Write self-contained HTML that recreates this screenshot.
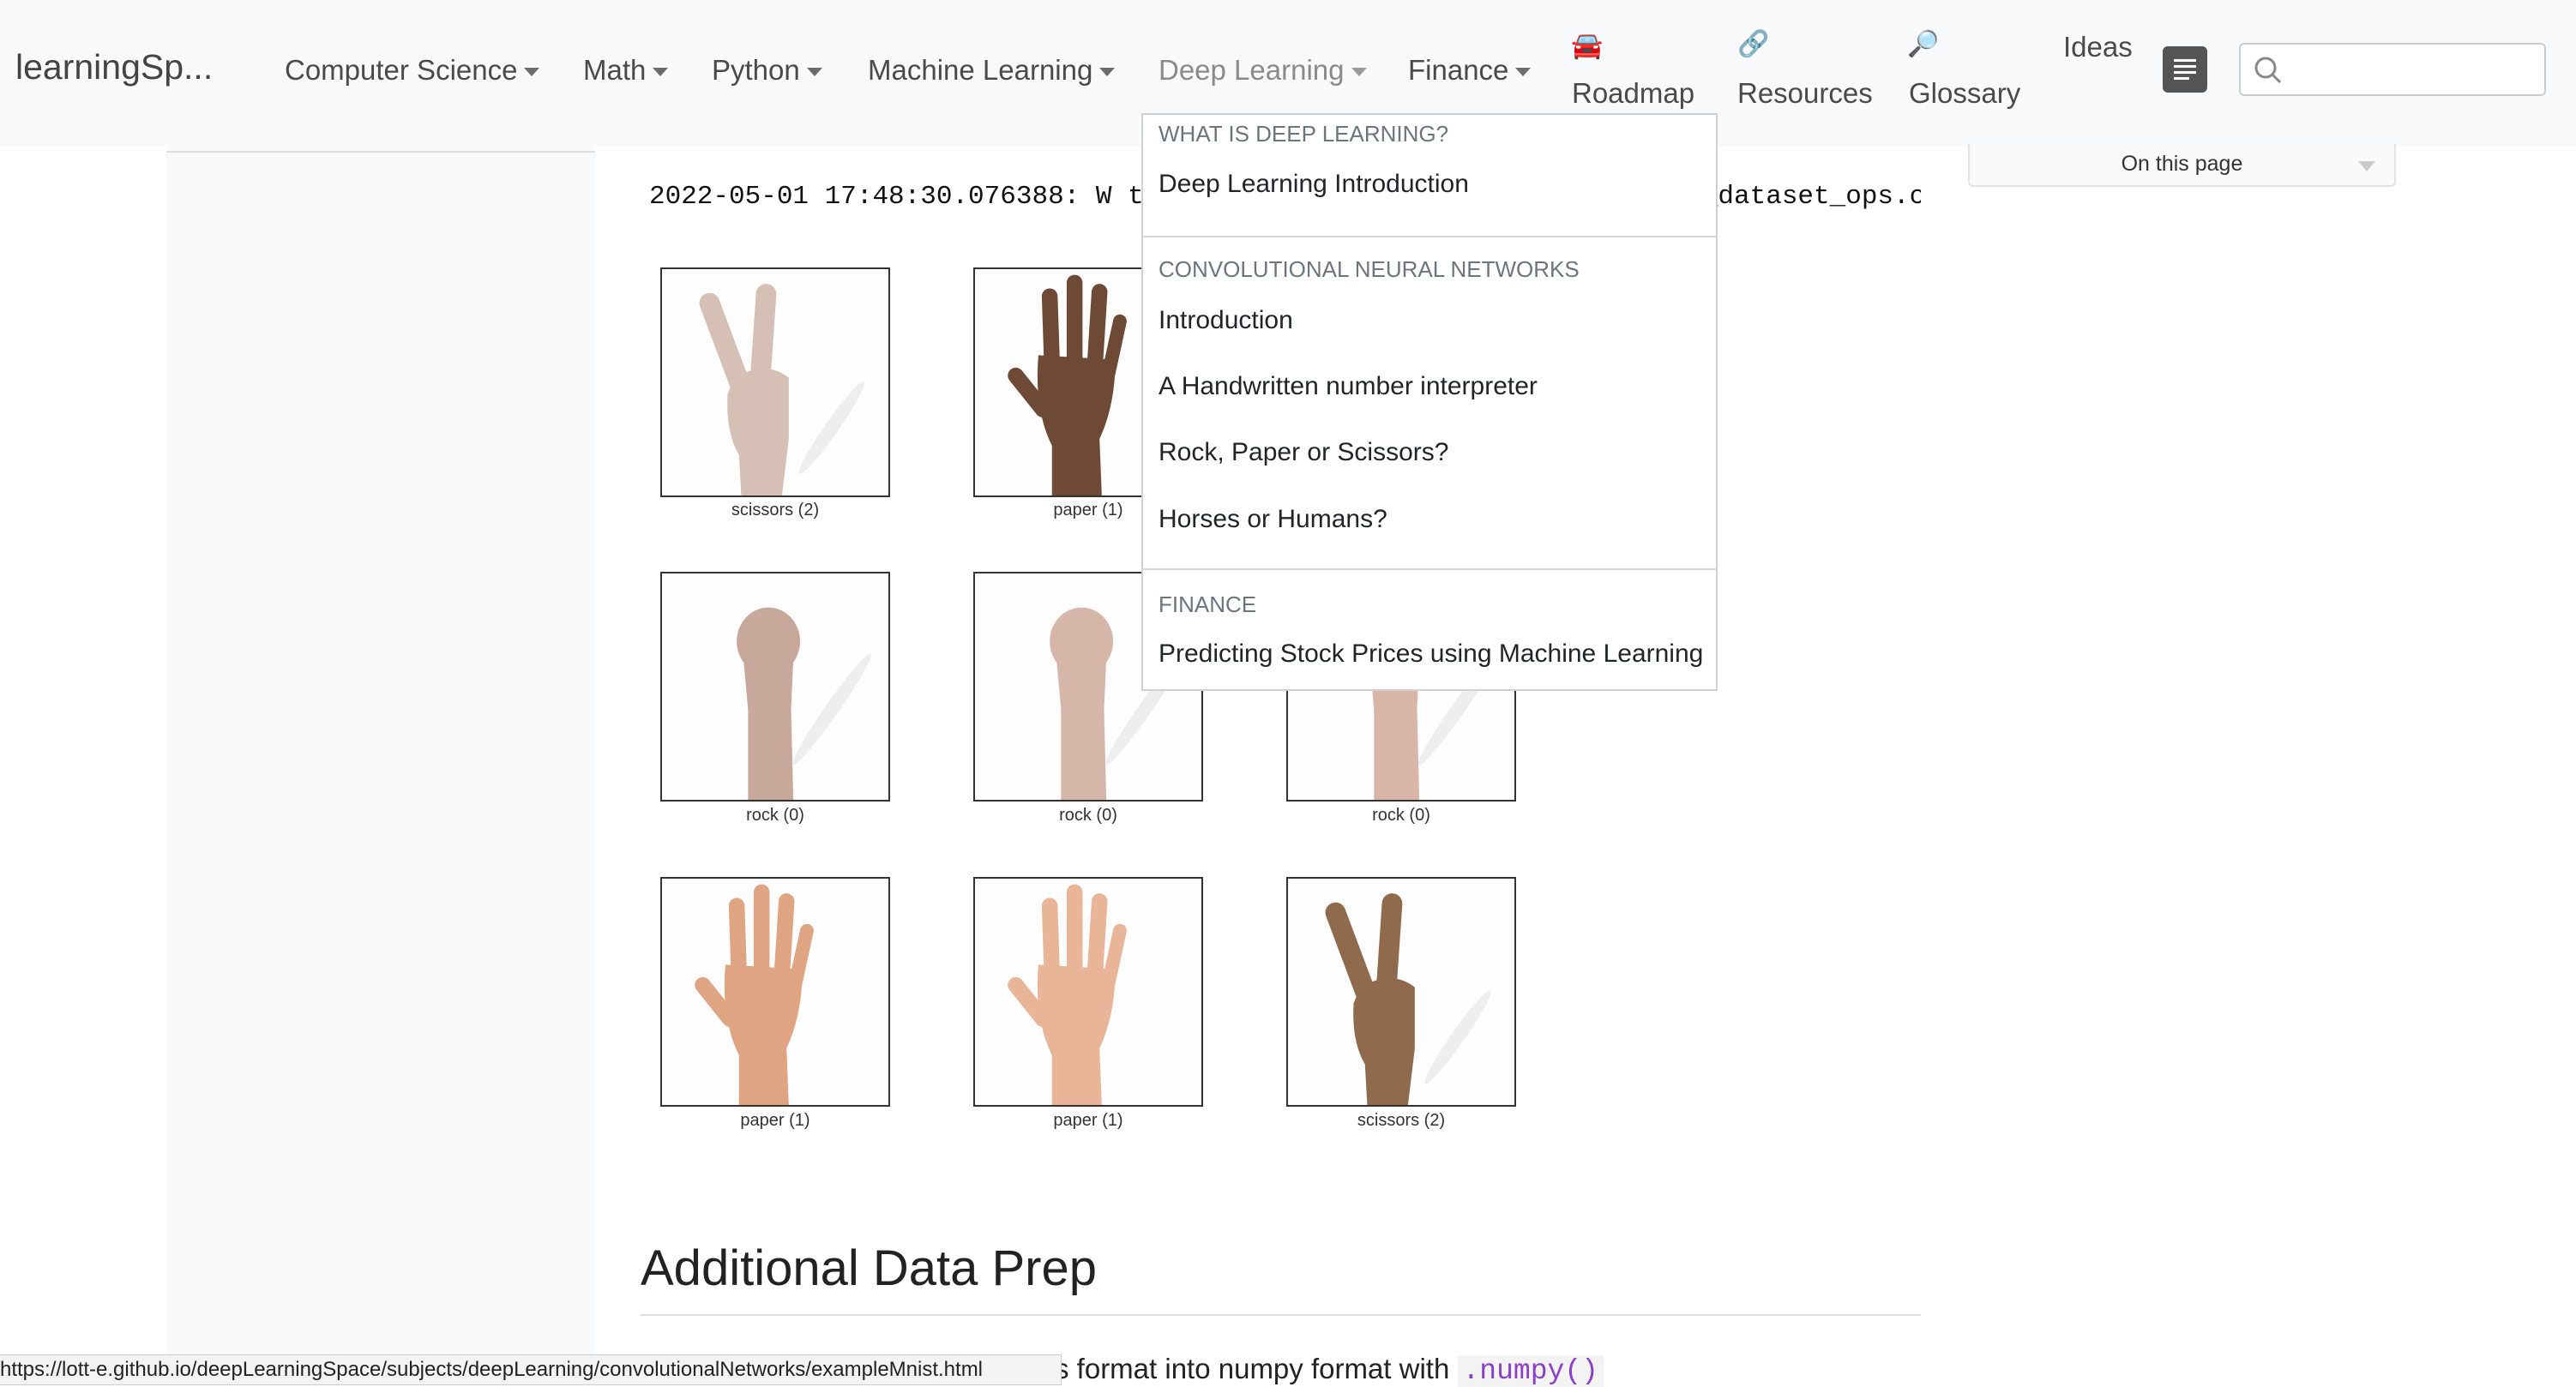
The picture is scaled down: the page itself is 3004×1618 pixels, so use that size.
<!DOCTYPE html>
<html><head><meta charset="utf-8"><style>
*{margin:0;padding:0;box-sizing:border-box}
body{width:3004px;height:1616px;background:#fff;position:relative;overflow:hidden;font-family:"Liberation Sans",sans-serif;color:#212529}
.a{position:absolute;white-space:nowrap}
.nav{position:absolute;left:0;top:0;width:3004px;height:171px;background:#f8f9fa}
.ni{position:absolute;top:60px;font-size:33px;color:#4a4a4a;line-height:44px}
.car{display:inline-block;width:0;height:0;border-left:9px solid transparent;border-right:9px solid transparent;border-top:10px solid #6c6c6c;margin-left:8px;vertical-align:middle}
.dd{position:absolute;left:1331px;top:132px;width:672px;height:674px;background:#fff;border:2px solid #d0d0d0}
.dh{position:absolute;left:18px;font-size:26px;color:#6c757d}
.di{position:absolute;left:18px;font-size:30px;color:#212529}
.hr{position:absolute;left:0;width:668px;border-top:2px solid #d8d8d8}
.img{position:absolute;width:268px;height:268px;border:2px solid #333;background:#fdfdfd;overflow:hidden}
.img svg{width:100%;height:100%}
.cap{position:absolute;width:268px;text-align:center;font-size:20px;color:#333}
</style></head><body>
<svg width="0" height="0" style="position:absolute">
<defs>
<symbol id="sc" viewBox="0 0 100 100"><g fill="currentColor" stroke="currentColor" stroke-linecap="round"><line x1="21" y1="15" x2="36" y2="55" stroke-width="9"/><line x1="46" y1="11" x2="43" y2="55" stroke-width="9"/><path d="M32 48 Q46 40 56 48 L56 75 L53 100 L35 100 L34 82 Q28 72 29 55Z" stroke="none"/></g><ellipse cx="75" cy="70" rx="3" ry="25" fill="#eee" transform="rotate(35 75 70)"/></symbol>
<symbol id="pp" viewBox="0 0 100 100"><g fill="currentColor" stroke="currentColor" stroke-linecap="round"><line x1="33" y1="12" x2="34" y2="42" stroke-width="7"/><line x1="44" y1="6" x2="44" y2="40" stroke-width="7"/><line x1="55" y1="10" x2="53" y2="42" stroke-width="7"/><line x1="64" y1="23" x2="59" y2="46" stroke-width="6"/><line x1="18" y1="47" x2="30" y2="62" stroke-width="7"/><path d="M28 38 L62 40 Q62 60 55 75 L56 100 L34 100 L34 78 Q26 62 28 38Z" stroke="none"/></g></symbol>
<symbol id="rk" viewBox="0 0 100 100"><g fill="currentColor"><ellipse cx="47" cy="30" rx="14" ry="15"/><path d="M36 38 L58 38 L57 60 L58 100 L38 100 L38 60Z"/></g><ellipse cx="75" cy="60" rx="3" ry="30" fill="#eee" transform="rotate(35 75 60)"/></symbol>
</defs></svg>

<div class="nav"></div>
<div class="a" style="left:18px;top:55px;font-size:41px;color:#444">learningSp...</div>
<div class="ni" style="left:332px">Computer Science<span class="car"></span></div>
<div class="ni" style="left:680px">Math<span class="car"></span></div>
<div class="ni" style="left:830px">Python<span class="car"></span></div>
<div class="ni" style="left:1012px">Machine Learning<span class="car"></span></div>
<div class="ni" style="left:1351px;color:#8a8a8a">Deep Learning<span class="car" style="border-top-color:#9a9a9a"></span></div>
<div class="ni" style="left:1642px">Finance<span class="car"></span></div>
<div class="a" style="left:1832px;top:36px;font-size:30px">🚘</div>
<div class="ni" style="left:1833px;top:87px">Roadmap</div>
<div class="a" style="left:2026px;top:34px;font-size:30px">🔗</div>
<div class="ni" style="left:2026px;top:87px">Resources</div>
<div class="a" style="left:2224px;top:34px;font-size:30px">🔎</div>
<div class="ni" style="left:2226px;top:87px">Glossary</div>
<div class="ni" style="left:2406px;top:33px">Ideas</div>
<div class="a" style="left:2522px;top:54px;width:52px;height:54px;background:#555;border-radius:6px">
<div style="position:absolute;left:13px;top:15px;width:26px;border-top:3px solid #fff"></div>
<div style="position:absolute;left:13px;top:22px;width:26px;border-top:3px solid #fff"></div>
<div style="position:absolute;left:13px;top:29px;width:26px;border-top:3px solid #fff"></div>
<div style="position:absolute;left:13px;top:36px;width:18px;border-top:3px solid #fff"></div></div>
<div class="a" style="left:2611px;top:50px;width:358px;height:62px;background:#fff;border:2px solid #ccc;border-radius:6px">
<svg style="position:absolute;left:14px;top:12px" width="36" height="36" viewBox="0 0 36 36"><circle cx="15" cy="15" r="11" fill="none" stroke="#888" stroke-width="3"/><line x1="23" y1="23" x2="32" y2="32" stroke="#888" stroke-width="3"/></svg></div>

<div class="a" style="left:194px;top:171px;width:500px;height:1445px;background:#f8f9fa"></div>
<div class="a" style="left:194px;top:171px;width:500px;height:7px;border-bottom:2px solid #ddd"></div>

<div class="a" style="left:2295px;top:168px;width:499px;height:50px;border:2px solid #e3e3e3;border-top:none;border-radius:0 0 6px 6px;background:#fafafa;font-size:25px;text-align:center;line-height:46px;color:#333">On this page<span style="position:absolute;right:22px;top:20px;border-left:10px solid transparent;border-right:10px solid transparent;border-top:12px solid #ccc"></span></div>

<div class="a" style="left:757px;top:212px;width:1483px;overflow:hidden;font-family:'Liberation Mono',monospace;font-size:31px;color:#111">2022-05-01 17:48:30.076388: W tensorflow/core/kernels/data/shuffle_dataset_ops.cc:768]</div>

<div class="img" style="left:770px;top:312px;color:#d6bfb4"><svg><use href="#sc"/></svg></div>
<div class="img" style="left:1135px;top:312px;color:#6e4a36"><svg><use href="#pp"/></svg></div>
<div class="img" style="left:770px;top:667px;color:#c9a89c"><svg><use href="#rk"/></svg></div>
<div class="img" style="left:1135px;top:667px;color:#d7b6aa"><svg><use href="#rk"/></svg></div>
<div class="img" style="left:1500px;top:667px;color:#d9b5a7"><svg><use href="#rk"/></svg></div>
<div class="img" style="left:770px;top:1023px;color:#dfa582"><svg><use href="#pp"/></svg></div>
<div class="img" style="left:1135px;top:1023px;color:#e8b598"><svg><use href="#pp"/></svg></div>
<div class="img" style="left:1500px;top:1023px;color:#8f6a4c"><svg><use href="#sc"/></svg></div>
<div class="cap" style="left:770px;top:584px">scissors (2)</div>
<div class="cap" style="left:1135px;top:584px">paper (1)</div>
<div class="cap" style="left:770px;top:940px">rock (0)</div>
<div class="cap" style="left:1135px;top:940px">rock (0)</div>
<div class="cap" style="left:1500px;top:940px">rock (0)</div>
<div class="cap" style="left:770px;top:1296px">paper (1)</div>
<div class="cap" style="left:1135px;top:1296px">paper (1)</div>
<div class="cap" style="left:1500px;top:1296px">scissors (2)</div>

<div class="dd">
<div class="dh" style="top:7px">WHAT IS DEEP LEARNING?</div>
<div class="di" style="top:64px">Deep Learning Introduction</div>
<div class="hr" style="top:141px"></div>
<div class="dh" style="top:165px">CONVOLUTIONAL NEURAL NETWORKS</div>
<div class="di" style="top:223px">Introduction</div>
<div class="di" style="top:300px">A Handwritten number interpreter</div>
<div class="di" style="top:377px">Rock, Paper or Scissors?</div>
<div class="di" style="top:455px">Horses or Humans?</div>
<div class="hr" style="top:529px"></div>
<div class="dh" style="top:556px">FINANCE</div>
<div class="di" style="top:612px">Predicting Stock Prices using Machine Learning</div>
</div>

<div class="a" style="left:747px;top:1446px;font-size:58px;color:#222">Additional Data Prep</div>
<div class="a" style="left:747px;top:1533px;width:1493px;border-top:2px solid #ddd"></div>
<div class="a" style="left:1230px;top:1578px;font-size:33px;color:#222">s format into numpy format with <span style="font-family:'Liberation Mono',monospace;color:#8a3fc8;background:#f3f3f3;padding:0 6px">.numpy()</span></div>
<div class="a" style="left:0;top:1580px;width:1238px;height:36px;background:#f3f3f3;border:1px solid #ccc;border-left:none;font-size:24px;line-height:34px;color:#222">https://lott-e.github.io/deepLearningSpace/subjects/deepLearning/convolutionalNetworks/exampleMnist.html</div>
</body></html>
